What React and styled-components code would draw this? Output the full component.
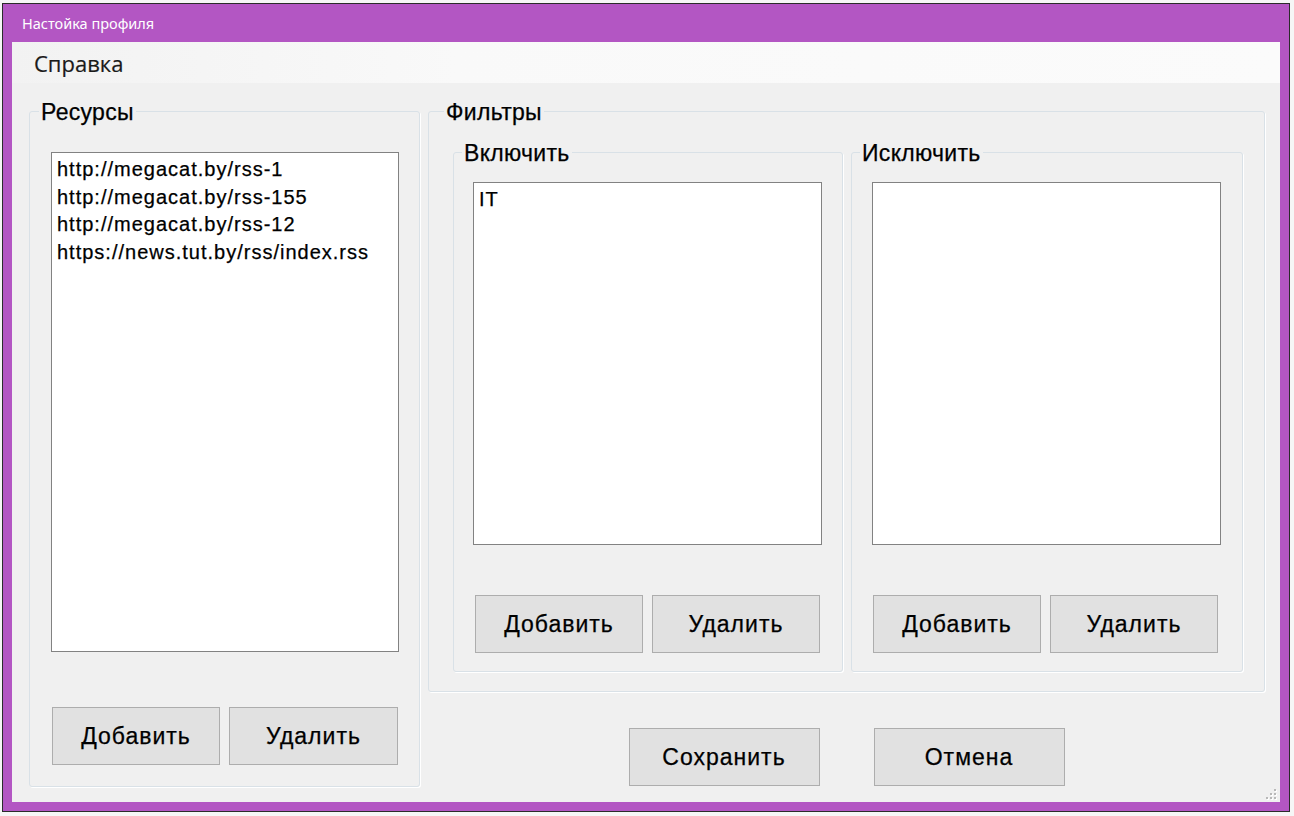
import React from 'react';
import styled, { createGlobalStyle } from 'styled-components';

const Global = createGlobalStyle`
  html, body { margin: 0; padding: 0; background: #f6f6f6; }
  body { font-family: "Liberation Sans", Arial, sans-serif; }
  *, *::before, *::after { box-sizing: border-box; }
`;

const Desktop = styled.div`
  width: 1294px;
  height: 816px;
  padding: 3px 0 0 2px;
  overflow: hidden;
  background: #f6f6f6;
`;

const Window = styled.div`
  width: 1288px;
  height: 809px;
  border: 1px solid #2b2b2b;
  background: #b356c3;
  display: flex;
  flex-direction: column;
`;

const TitleBar = styled.div`
  height: 38px;
  flex: none;
  display: flex;
  align-items: center;
  padding-left: 19px;
  color: #ffffff;
  font-family: "Noto Sans", "Open Sans", sans-serif;
  font-size: 14.5px;
`;

const Client = styled.div`
  flex: 1;
  margin: 0 9px 9px;
  background: #f0f0f0;
  display: flex;
  flex-direction: column;
  position: relative;
`;

const MenuBar = styled.div`
  height: 41px;
  flex: none;
  display: flex;
  align-items: center;
  padding-left: 22px;
  background: linear-gradient(to right, #f2f2f2, #f9f9f9 35%, #fbfbfb);
`;

const MenuItem = styled.span`
  font-family: "Open Sans", "Noto Sans", sans-serif;
  font-size: 22px;
  color: #1a1a1a;
  -webkit-text-stroke: 0.2px #1a1a1a;
`;

const Body = styled.div`
  display: grid;
  grid-template-columns: 391px 837px;
  column-gap: 8px;
  padding: 28px 0 0 17px;
  align-items: start;
`;

const GroupBox = styled.section`
  display: flex;
  flex-direction: column;
  width: ${(p) => p.$w}px;
  border: 1px solid #d9e1e7;
  border-radius: 3px;
  box-shadow: 1px 1px 0 #ffffff;
  padding-bottom: ${(p) => p.$pb}px;
`;

const Caption = styled.h2`
  align-self: flex-start;
  margin: -12px 0 0 ${(p) => p.$indent}px;
  padding: 0 2px;
  background: #f0f0f0;
  font-family: "Liberation Sans", Arial, sans-serif;
  font-weight: 400;
  font-size: 23px;
  line-height: 24px;
  letter-spacing: 0.3px;
  color: #000000;
  -webkit-text-stroke: 0.25px #000;
`;

const Content = styled.div`
  display: flex;
  flex-direction: column;
  align-items: flex-start;
  padding-left: ${(p) => p.$pl}px;
  margin-top: ${(p) => p.$mt}px;
`;

const FilterRow = styled.div`
  display: flex;
  gap: 8px;
  padding-left: 24px;
  margin-top: 28px;
`;

const ListBox = styled.ul`
  list-style: none;
  margin: 0;
  padding: 3px 5px;
  width: ${(p) => p.$w}px;
  height: ${(p) => p.$h}px;
  background: #ffffff;
  border: 1px solid #828282;
  font-family: "Liberation Sans", Arial, sans-serif;
  font-size: 20px;
  line-height: 27.5px;
  letter-spacing: 1px;
  color: #000000;
  -webkit-text-stroke: 0.25px #000;
  overflow: hidden;
`;

const Item = styled.li`
  white-space: nowrap;
`;

const ButtonRow = styled.div`
  display: flex;
  gap: 9px;
  margin-top: ${(p) => p.$mt}px;
  padding-left: ${(p) => p.$offset}px;
`;

const Button = styled.button`
  width: ${(p) => p.$w || 168}px;
  height: 58px;
  margin: 0;
  padding: 0;
  background: #e1e1e1;
  border: 1px solid #adadad;
  border-radius: 0;
  font-family: "Liberation Sans", Arial, sans-serif;
  font-size: 23px;
  letter-spacing: 1px;
  color: #000000;
  -webkit-text-stroke: 0.25px #000;
  cursor: default;
`;

const RightColumn = styled.div`
  display: flex;
  flex-direction: column;
`;

const Actions = styled.div`
  display: flex;
  justify-content: center;
  gap: 54px;
  margin-top: 36px;
`;

const Grip = styled.svg`
  position: absolute;
  right: 2px;
  bottom: 1px;
`;

const resources = [
  'http://megacat.by/rss-1',
  'http://megacat.by/rss-155',
  'http://megacat.by/rss-12',
  'https://news.tut.by/rss/index.rss',
];

function FilterGroup({ title, width, listLeft, btnOffset, items }) {
  return (
    <GroupBox $w={width} $pb={18}>
      <Caption $indent={8}>{title}</Caption>
      <Content $pl={listLeft} $mt={17}>
        <ListBox $w={349} $h={363}>
          {items.map((t) => (
            <Item key={t}>{t}</Item>
          ))}
        </ListBox>
        <ButtonRow $mt={50} $offset={btnOffset}>
          <Button>Добавить</Button>
          <Button>Удалить</Button>
        </ButtonRow>
      </Content>
    </GroupBox>
  );
}

export default function App() {
  return (
    <>
      <Global />
      <Desktop>
        <Window>
          <TitleBar>Настойка профиля</TitleBar>
          <Client>
            <MenuBar>
              <MenuItem>Справка</MenuItem>
            </MenuBar>
            <Body>
              <GroupBox $w={391} $pb={21}>
                <Caption $indent={9}>Ресурсы</Caption>
                <Content $pl={21} $mt={28}>
                  <ListBox $w={348} $h={500}>
                    {resources.map((r) => (
                      <Item key={r}>{r}</Item>
                    ))}
                  </ListBox>
                  <ButtonRow $mt={55} $offset={1}>
                    <Button>Добавить</Button>
                    <Button $w={169}>Удалить</Button>
                  </ButtonRow>
                </Content>
              </GroupBox>
              <RightColumn>
                <GroupBox $w={837} $pb={19}>
                  <Caption $indent={15}>Фильтры</Caption>
                  <FilterRow>
                    <FilterGroup title="Включить" width={390} listLeft={19} btnOffset={2} items={['IT']} />
                    <FilterGroup title="Исключить" width={392} listLeft={20} btnOffset={1} items={[]} />
                  </FilterRow>
                </GroupBox>
                <Actions>
                  <Button $w={191}>Сохранить</Button>
                  <Button $w={191}>Отмена</Button>
                </Actions>
              </RightColumn>
            </Body>
            <Grip width="12" height="12" viewBox="0 0 12 12">
              {[
                [8, 0],
                [4, 4],
                [8, 4],
                [0, 8],
                [4, 8],
                [8, 8],
              ].map(([x, y]) => (
                <g key={`${x}-${y}`}>
                  <rect x={x + 1} y={y + 1} width="2" height="2" fill="#ffffff" />
                  <rect x={x} y={y} width="2" height="2" fill="#b8b8b8" />
                </g>
              ))}
            </Grip>
          </Client>
        </Window>
      </Desktop>
    </>
  );
}
